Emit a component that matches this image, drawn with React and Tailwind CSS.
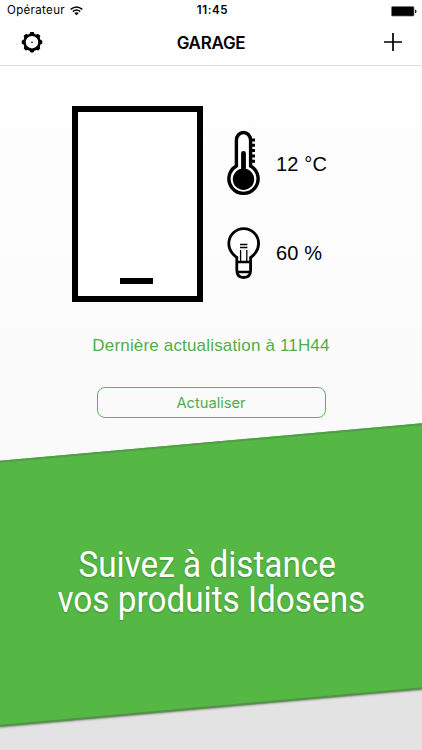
import React from "react";

function WifiIcon() {
  return (
    <svg className="h-[10px] w-[13px]" viewBox="0 0 13 10" fill="none" stroke="#000" strokeWidth="1.5">
      <path d="M.7 3.4Q6.5-1.5 12.3 3.4M2.8 5.6Q6.5 2.5 10.2 5.6" />
      <path d="M4.3 7.1Q6.5 5.5 8.7 7.1L6.5 9.3Z" fill="#000" stroke="none" />
    </svg>
  );
}

function BatteryIcon() {
  return (
    <svg className="h-[11px] w-[26px]" viewBox="0 0 26 11">
      <rect x=".5" y=".5" width="22.5" height="9.6" rx="1.2" fill="#000" stroke="#777" strokeWidth=".7" />
      <path d="M24 3.7h.8q.7 0 .7 1.6t-.7 1.6H24Z" fill="#222" />
    </svg>
  );
}

function GearIcon() {
  return (
    <svg className="h-[22px] w-[22px]" viewBox="-11 -11 22 22">
      <circle cy="-.8" r="7.5" fill="none" stroke="#000" strokeWidth="2.5" />
      {[0, 45, 90, 135, 180, 225, 270, 315].map((a) => (
        <path
          key={a}
          d="M-2.8-7.4L-1.9-9.6Q-1.7-10.3-1-10.3H1Q1.7-10.3 1.9-9.6L2.8-7.4Z"
          transform={`translate(0 -.8) rotate(${a})`}
        />
      ))}
      <circle cy="-.8" r=".8" />
    </svg>
  );
}

function Thermometer() {
  return (
    <svg className="h-[68px] w-[34px]" viewBox="0 0 34 68">
      <path
        d="M9.4 36V10.5C9.4 5.8 12.5 2.5 16.5 2.5s7.1 3.3 7.1 8V36A14.6 14.6 0 1 1 9.4 36Z"
        fill="#fff" stroke="#000" strokeWidth="3.4"
      />
      <circle cx="16.5" cy="49.3" r="10.7" />
      <path d="M16.5 49V23.3" stroke="#000" strokeWidth="4.8" strokeLinecap="round" />
      <path d="M24 10h4M24 15.3h4M24 20.6h4M24 25.9h4M24 31.2h4" stroke="#000" strokeWidth="3" />
    </svg>
  );
}

function Bulb() {
  return (
    <svg className="h-[54px] w-[34px]" viewBox="0 0 34 54" fill="none" stroke="#000">
      <path
        d="M9.8 31.5C5.4 28.3 1.8 24.2 1.8 17.5a14.9 14.9 0 0 1 29.8 0c0 6.7-3.6 10.8-8 14V44c0 5.2-2.7 7.5-6.9 7.5S9.8 49.2 9.8 44Z"
        fill="#fff" strokeWidth="2.8"
      />
      <path d="M9.8 36h13.8M9.8 46h13.8" strokeWidth="2.5" />
      <path d="M13 18.5h7.4M13 21.5h7.4M13.6 24v12M19.8 24v12" strokeWidth="1.3" />
    </svg>
  );
}

function Reading({ icon, children }) {
  return (
    <div className="flex items-center gap-[15px]">
      {icon}
      <span className="whitespace-pre text-[20px] leading-6 tracking-[0.15px]">{children}</span>
    </div>
  );
}

export default function App() {
  return (
    <div className="h-[750px] w-[422px] overflow-hidden bg-[#e3e3e3] font-['Liberation_Sans',sans-serif] text-black">
      <div className="h-[535px] bg-linear-to-b from-white to-[#f9f9f9]">
        <header className="h-[66px] border-b border-[#dedede] bg-white font-['Inter',sans-serif]">
          <div className="grid h-[22px] grid-cols-[1fr_auto_1fr] items-center pr-[5px] pl-[7px] text-[11.5px]">
            <div className="flex items-center gap-[5px]">
              <span className="tracking-[0.35px]">Opérateur</span>
              <WifiIcon />
            </div>
            <span className="pl-px text-center font-semibold tracking-[0.6px]">11:45</span>
            <div className="flex justify-end">
              <BatteryIcon />
            </div>
          </div>
          <div className="grid h-[41px] grid-cols-[1fr_auto_1fr] items-center pr-[20px] pl-[21px]">
            <GearIcon />
            <h1 className="translate-x-[-0.5px] translate-y-[0.5px] text-[17px] font-semibold tracking-[-0.3px]">GARAGE</h1>
            <svg className="h-[18px] w-[18px] -translate-y-px justify-self-end" viewBox="0 0 18 18" stroke="#000" strokeWidth="1.7">
              <path d="M9 0v18M0 9h18" />
            </svg>
          </div>
        </header>
        <main>
          <div className="flex pt-[40px] pl-[72px]">
            <div className="flex h-[196px] w-[131px] items-end border-[6px] border-black bg-white pb-[12px] pl-[42px]">
              <div className="h-[6px] w-[33px] bg-black" />
            </div>
            <div className="flex flex-col gap-[28px] pt-[24px] pl-[24px]">
              <Reading icon={<Thermometer />}>12 °C</Reading>
              <Reading icon={<Bulb />}>60 %</Reading>
            </div>
          </div>
          <p className="mt-[33px] text-center text-[17px] leading-[22px] tracking-[0.17px] text-[#50ae49]">
            Dernière actualisation à 11H44
          </p>
          <button className="mx-auto mt-[30px] block h-[31px] w-[229px] rounded-[8px] border border-[#5cb355] pt-px text-center font-['Inter',sans-serif] text-[14.7px] leading-[29px] text-[#50ae49]">
            Actualiser
          </button>
        </main>
      </div>
      <section className="mt-[-93px] h-[266px] skew-y-[-5.1deg] border-t-2 border-b-2 border-t-[#4ea042] border-b-[#55914c] bg-[#55b845] shadow-[0_1px_2px_rgba(0,0,0,0.4)]">
        <h2 className="flex h-full skew-y-[5.1deg] flex-col items-center pt-[104px] text-center font-['Roboto',sans-serif] text-[36px] leading-[35px] whitespace-nowrap text-white [text-shadow:0_1px_2px_rgba(0,0,0,0.25)]">
          <span className="block translate-x-[-4px] scale-x-[0.925]">Suivez à distance</span>
          <span className="block scale-x-[0.925]">vos produits Idosens</span>
        </h2>
      </section>
    </div>
  );
}
